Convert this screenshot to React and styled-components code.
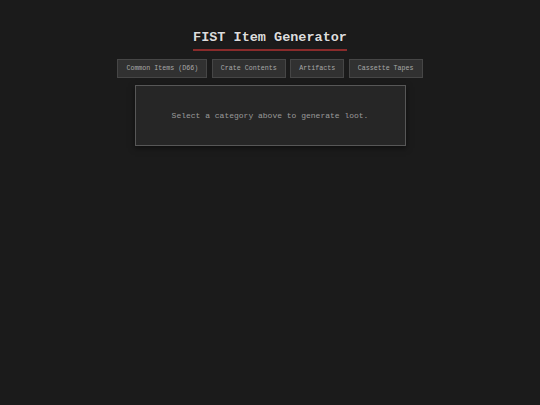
import React, { useState } from 'react';
import styled, { createGlobalStyle } from 'styled-components';

const GlobalStyle = createGlobalStyle`
  html, body {
    margin: 0;
    padding: 0;
    background: #1b1b1b;
  }
  body {
    font-family: "Liberation Mono", "Courier New", monospace;
    color: #d8d8d8;
  }
`

const Page = styled.div`
  min-height: 405px;
  display: flex;
  flex-direction: column;
  align-items: center;
  padding-top: 30px;
  box-sizing: border-box;
`

const Title = styled.h1`
  margin: 0;
  font-size: 13.5px;
  line-height: 15px;
  font-weight: bold;
  color: #dcdcdc;
  padding-bottom: 4px;
  border-bottom: 2px solid #8a2b2b;
  text-shadow: 0 0 2px rgba(0, 0, 0, 0.6);
`

const Tabs = styled.div`
  display: flex;
  gap: 4.5px;
  margin-top: 8px;
`

const Tab = styled.button`
  font-family: inherit;
  font-size: 6.67px;
  line-height: 9px;
  padding: 4px 8px;
  color: ${(p) => (p.$active ? '#e0e0e0' : '#a8a8a8')};
  background: ${(p) => (p.$active ? '#3d2626' : '#313131')};
  border: 1px solid #464646;
  border-radius: 0;
  cursor: pointer;
  white-space: nowrap;
`

const Output = styled.div`
  margin-top: 7px;
  width: 271px;
  height: 61px;
  box-sizing: border-box;
  display: flex;
  align-items: center;
  justify-content: center;
  background: #262626;
  border: 1px solid #575757;
  box-shadow: 0 2px 6px rgba(0, 0, 0, 0.5);
  font-size: 8px;
  padding-bottom: 1px;
  color: #9a9a9a;
`

const categories = ['Common Items (D66)', 'Crate Contents', 'Artifacts', 'Cassette Tapes'];

export default function App() {
  const [active, setActive] = useState(null);

  return (
    <>
      <GlobalStyle />
      <Page>
        <Title>FIST Item Generator</Title>
        <Tabs>
          {categories.map((c) => (
            <Tab key={c} $active={active === c} onClick={() => setActive(c)}>
              {c}
            </Tab>
          ))}
        </Tabs>
        <Output>
          {active ? `Rolling on ${active}...` : 'Select a category above to generate loot.'}
        </Output>
      </Page>
    </>
  );
}
